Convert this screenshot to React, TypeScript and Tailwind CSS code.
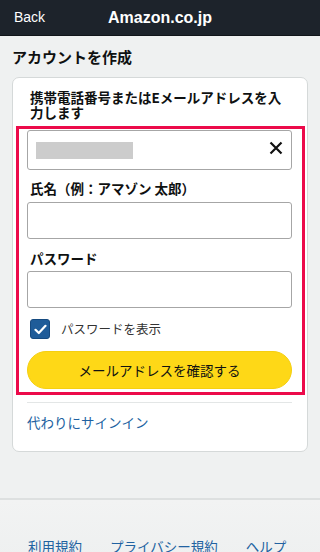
import React from "react";

const jp = { fontFamily: '"Noto Sans CJK JP", "Noto Sans", sans-serif' };

export default function App() {
  return (
    <div className="w-[320px] h-[552px] overflow-hidden bg-[#eff1f1] text-[#0f1111]" style={jp}>
      {/* Header */}
      <div className="relative h-[36px] bg-[#1d232b] border-b border-[#11151a] flex items-center">
        <span
          className="pl-[14px] text-[14px] text-white"
          style={{ fontFamily: '"Liberation Sans", Arial, sans-serif' }}
        >
          Back
        </span>
        <span
          className="absolute left-0 right-0 top-0 h-[35px] flex items-center justify-center text-[16px] font-bold text-white pointer-events-none"
          style={{ fontFamily: '"Liberation Sans", Arial, sans-serif' }}
        >
          Amazon.co.jp
        </span>
      </div>

      {/* Heading */}
      <h1 className="pl-[12px] pt-[11px] text-[15px] leading-[20px] font-bold">アカウントを作成</h1>

      {/* Card */}
      <div className="mx-[12px] mt-[10px] bg-white border border-[#d5d9d9] rounded-[7px] pl-[14px] pr-[15px] pt-[12px] pb-[20px]">
        <label className="block pl-[3px] text-[13.5px] leading-[15px] font-bold">
          携帯電話番号またはEメールアドレスを入力します
        </label>

        <div className="-ml-[11px] -mr-[13px] mt-[6px] border-[3px] border-[#ec0a4a] pl-[8px] pr-[10px] pt-[1px] pb-[3px]">
          {/* Input 1 */}
          <div className="h-[40px] border border-[#a6a6a6] rounded-[3px] flex items-center justify-between pl-[8px] pr-[8px]">
            <div className="w-[97px] h-[17px] bg-[#cccccc]" />
            <svg width="14" height="14" viewBox="0 0 14 14" className="-mt-[4px]">
              <path d="M1.5 1.5 L12.5 12.5 M12.5 1.5 L1.5 12.5" stroke="#111" strokeWidth="2.2" strokeLinecap="butt" />
            </svg>
          </div>

          <label className="block mt-[10px] pl-[3px] text-[13.5px] leading-[16px] font-bold">
            氏名（例：アマゾン 太郎）
          </label>
          <div className="mt-[6px] h-[37px] border border-[#a6a6a6] rounded-[3px]" />

          <label className="block mt-[11px] pl-[3px] text-[13.5px] leading-[16px] font-bold">
            パスワード
          </label>
          <div className="mt-[5px] h-[37px] border border-[#a6a6a6] rounded-[3px]" />

          {/* Checkbox */}
          <div className="mt-[11px] flex items-center">
            <div className="ml-[3px] w-[20px] h-[20px] rounded-[3px] bg-[#1f5c99] border border-[#164a80] flex items-center justify-center">
              <svg width="13" height="11" viewBox="0 0 13 11">
                <path d="M1.5 5.8 L4.8 9 L11.5 1.8" fill="none" stroke="#fff" strokeWidth="2.2" strokeLinecap="round" strokeLinejoin="round" />
              </svg>
            </div>
            <span className="ml-[11px] text-[12.5px] leading-[16px] text-[#333]">パスワードを表示</span>
          </div>

          {/* Button */}
          <button className="mt-[12px] w-full h-[38px] rounded-full bg-[#fed817] border border-[#f5cf10] text-[13.5px] text-[#0f1111] flex items-center justify-center">
            メールアドレスを確認する
          </button>
        </div>

        <div className="mt-[7px] h-px bg-[#e3e6e6]" />

        <div className="mt-[10px] pl-[0px] text-[13.5px] leading-[18px] text-[#2162a1]">代わりにサインイン</div>
      </div>

      {/* Footer */}
      <div className="mt-[46px] border-t-2 border-[#dde0e0] bg-gradient-to-b from-[#f2f3f3] to-[#eef0f0] pt-[36px] h-[60px]">
        <div className="flex pl-[28px] gap-[28px] text-[13.5px] leading-[20px] text-[#2162a1]">
          <span>利用規約</span>
          <span>プライバシー規約</span>
          <span>ヘルプ</span>
        </div>
      </div>
    </div>
  );
}
